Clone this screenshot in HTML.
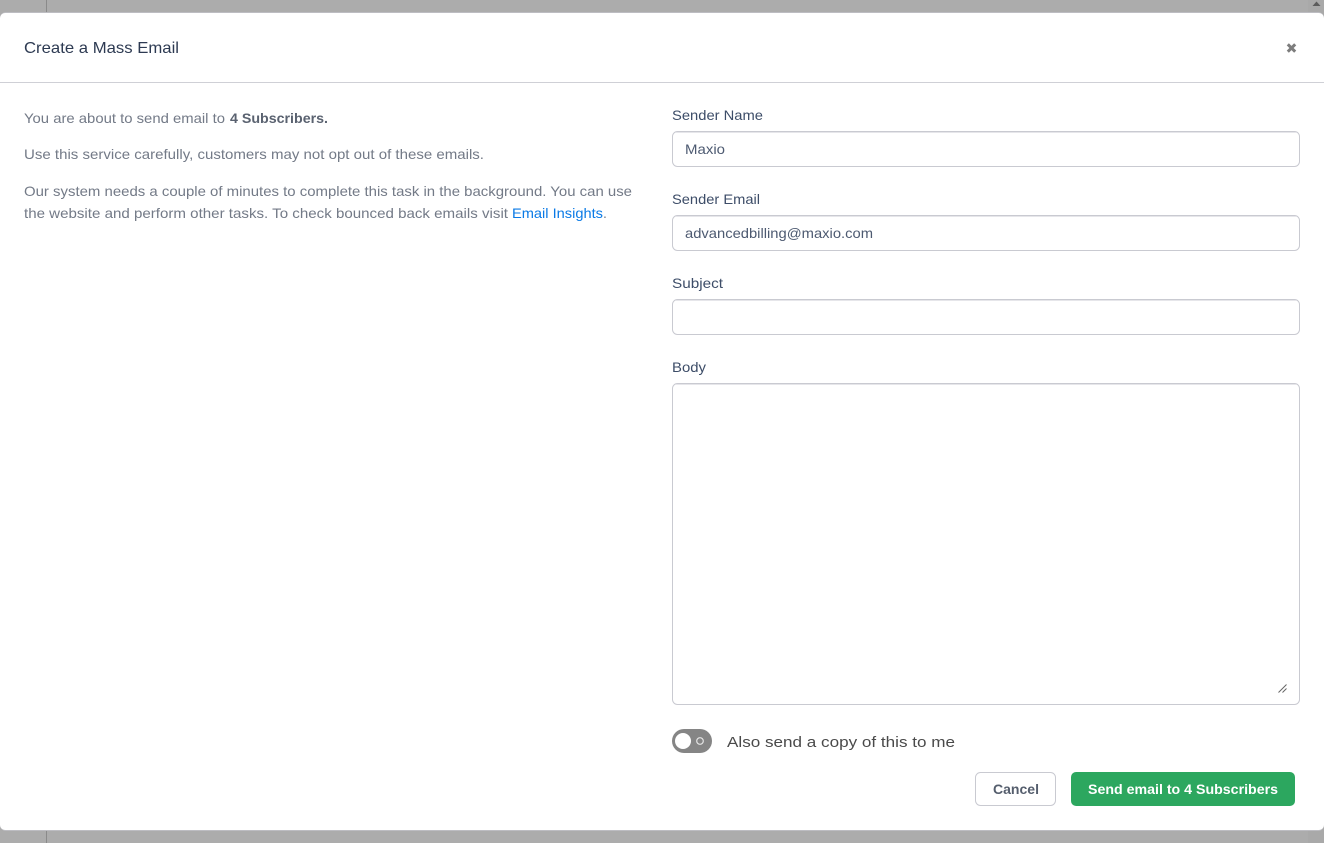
<!DOCTYPE html>
<html lang="en">
<head>
<meta charset="utf-8">
<title>Create a Mass Email</title>
<style>
html,body{margin:0;padding:0;width:1324px;height:843px;overflow:hidden;background:#acacac}
svg{display:block}
text{font-family:"Liberation Sans",sans-serif;font-size:14px}
.p{fill:#737a87}
.l{fill:#3d4d68}
.v{fill:#4d5a71}
</style>
</head>
<body>
<svg width="1324" height="843" viewBox="0 0 1324 843" xmlns="http://www.w3.org/2000/svg">
<rect width="1324" height="843" fill="#acacac"/>
<rect x="1308" y="0" width="16" height="843" fill="#a9a9a9"/>
<rect x="46" y="0" width="1" height="843" fill="#8a8a8a"/>
<path d="M1312.5 6 L1316.5 1.5 L1320.5 6 Z" fill="#5c5c5c"/>
<rect x="0" y="12" width="1324" height="819" rx="6" fill="#bdbdc2"/>
<rect x="0" y="13" width="1324" height="817" rx="5" fill="#fff"/>
<rect x="0" y="82" width="1324" height="1" fill="#cfd0d6"/>

<text x="24" y="53" style="font-size:16px" fill="#2d3a52" textLength="155" lengthAdjust="spacingAndGlyphs">Create a Mass Email</text>
<path d="M1287.8 44.3 L1295.2 51.7 M1295.2 44.3 L1287.8 51.7" stroke="#7d7d7d" stroke-width="3" fill="none"/>

<text class="p" x="24" y="123" textLength="201" lengthAdjust="spacingAndGlyphs">You are about to send email to</text>
<text x="230" y="123" fill="#5a6270" font-weight="700" textLength="98" lengthAdjust="spacingAndGlyphs">4 Subscribers.</text>
<text class="p" x="24" y="159" textLength="460" lengthAdjust="spacingAndGlyphs">Use this service carefully, customers may not opt out of these emails.</text>
<text class="p" x="24" y="196" textLength="608" lengthAdjust="spacingAndGlyphs">Our system needs a couple of minutes to complete this task in the background. You can use</text>
<text class="p" x="24" y="218" textLength="484" lengthAdjust="spacingAndGlyphs">the website and perform other tasks. To check bounced back emails visit</text>
<text x="512" y="218" fill="#0a7ae6" textLength="91" lengthAdjust="spacingAndGlyphs">Email Insights</text>
<text class="p" x="603" y="218">.</text>

<text class="l" x="672" y="120" textLength="91" lengthAdjust="spacingAndGlyphs">Sender Name</text>
<rect x="672.5" y="131.5" width="627" height="35" rx="5" fill="#fff" stroke="#c9cad1"/>
<rect x="676" y="132" width="620" height="1" fill="#e6e6ea"/>
<text class="v" x="685" y="154" textLength="40" lengthAdjust="spacingAndGlyphs">Maxio</text>

<text class="l" x="672" y="204" textLength="88" lengthAdjust="spacingAndGlyphs">Sender Email</text>
<rect x="672.5" y="215.5" width="627" height="35" rx="5" fill="#fff" stroke="#c9cad1"/>
<rect x="676" y="216" width="620" height="1" fill="#e6e6ea"/>
<text class="v" x="685" y="238" textLength="188" lengthAdjust="spacingAndGlyphs">advancedbilling@maxio.com</text>

<text class="l" x="672" y="288" textLength="51" lengthAdjust="spacingAndGlyphs">Subject</text>
<rect x="672.5" y="299.5" width="627" height="35" rx="5" fill="#fff" stroke="#c9cad1"/>
<rect x="676" y="300" width="620" height="1" fill="#e6e6ea"/>

<text class="l" x="672" y="372" textLength="34" lengthAdjust="spacingAndGlyphs">Body</text>
<rect x="672.5" y="383.5" width="627" height="321" rx="5" fill="#fff" stroke="#c9cad1"/>
<rect x="676" y="384" width="620" height="1" fill="#e6e6ea"/>
<path d="M1278.5 692.5 L1286.5 684.5 M1282.5 692.5 L1286.5 688.5" stroke="#666" stroke-width="1" fill="none"/>

<rect x="672" y="729" width="40" height="24" rx="12" fill="#858585"/>
<circle cx="683" cy="741" r="8" fill="#fff"/>
<circle cx="700" cy="741" r="3.3" fill="none" stroke="#e4e4e4" stroke-width="1.2"/>
<text x="727" y="747" style="font-size:15px" fill="#4a4a4a" textLength="228" lengthAdjust="spacingAndGlyphs">Also send a copy of this to me</text>

<rect x="975.5" y="772.5" width="80" height="33" rx="5" fill="#fff" stroke="#c9cad1"/>
<text x="993" y="794" fill="#555e6d" font-weight="700" textLength="46" lengthAdjust="spacingAndGlyphs">Cancel</text>
<rect x="1071" y="772" width="224" height="34" rx="5" fill="#2ca75f"/>
<text x="1088" y="794" fill="#fff" font-weight="700" textLength="190" lengthAdjust="spacingAndGlyphs">Send email to 4 Subscribers</text>
</svg>
</body>
</html>
